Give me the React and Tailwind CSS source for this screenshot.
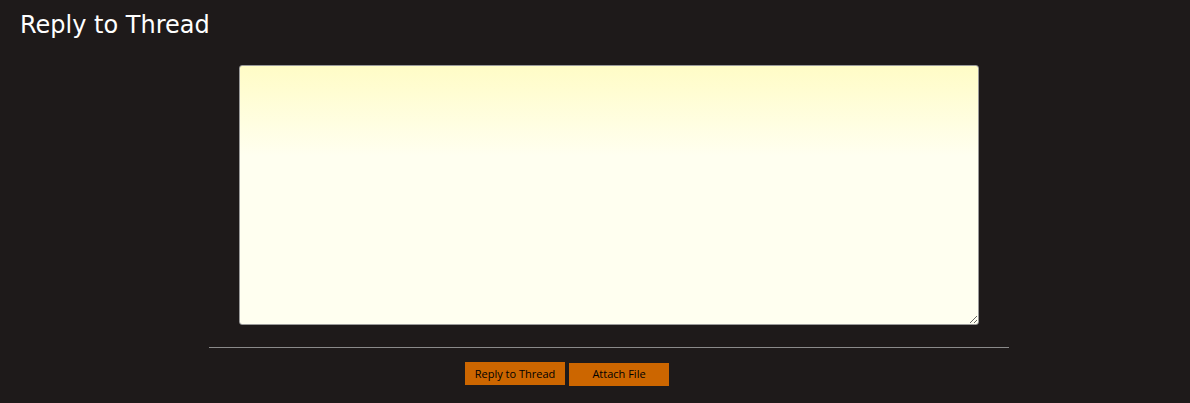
export default function App() {
  return (
    <div className="min-h-[403px] bg-[#1e1a1a] pt-[10px]" style={{ fontFamily: '"DejaVu Sans", Verdana, sans-serif' }}>
      <h1 className="pl-5 text-[24px] leading-[30px] text-white font-normal">Reply to Thread</h1>
      <div className="ml-[209px] w-[800px] mt-[25px]">
        <div className="px-[30px]">
          <textarea
            autoFocus
            className="block w-[740px] h-[260px] resize rounded-[3px] border border-[#9a9a9a] bg-gradient-to-b from-[#fffcc6] via-[#fffff0] via-[35%] to-[#fffff0] p-1 text-sm text-black outline-none"
          />
        </div>
        <div className="mt-[22px] border-t border-[#8a8a8a]" />
        <div className="mt-[14px] flex items-start gap-[4px] pl-[256px]">
          <button className="h-[23px] w-[100px] bg-[#cc6600] pt-px text-[11px] text-black" style={{ fontFamily: '"Open Sans", sans-serif' }}>
            Reply to Thread
          </button>
          <button className="mt-px h-[23px] w-[100px] bg-[#cc6600] text-[11px] text-black" style={{ fontFamily: '"Open Sans", sans-serif' }}>
            Attach File
          </button>
        </div>
      </div>
    </div>
  );
}
